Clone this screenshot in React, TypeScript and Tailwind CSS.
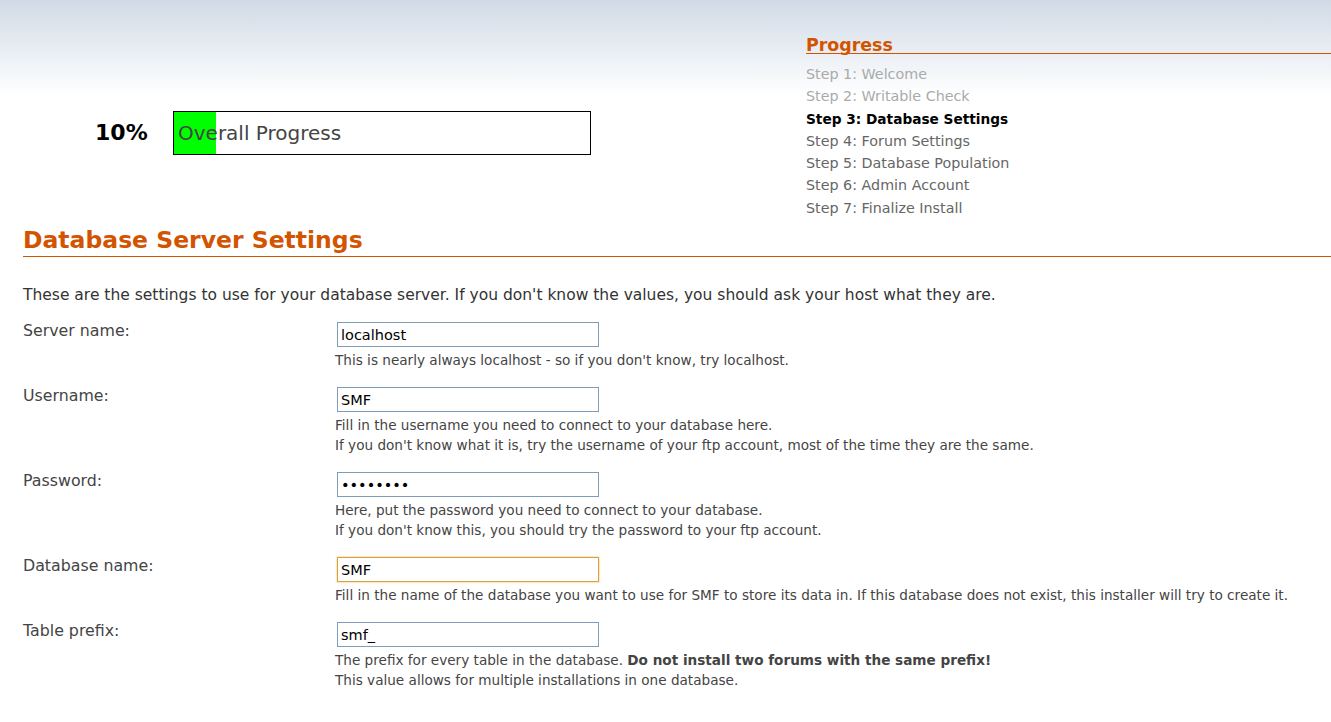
import { useState } from 'react'

type Field = {
  key: string
  label: string
  type: 'text' | 'password'
  initial: string
  help: React.ReactNode[]
  focused?: boolean
}

const steps = [
  { label: 'Step 1: Welcome', state: 'done' },
  { label: 'Step 2: Writable Check', state: 'done' },
  { label: 'Step 3: Database Settings', state: 'current' },
  { label: 'Step 4: Forum Settings', state: 'todo' },
  { label: 'Step 5: Database Population', state: 'todo' },
  { label: 'Step 6: Admin Account', state: 'todo' },
  { label: 'Step 7: Finalize Install', state: 'todo' },
]

const fields: Field[] = [
  {
    key: 'server',
    label: 'Server name:',
    type: 'text',
    initial: 'localhost',
    help: ["This is nearly always localhost - so if you don't know, try localhost."],
  },
  {
    key: 'user',
    label: 'Username:',
    type: 'text',
    initial: 'SMF',
    help: [
      'Fill in the username you need to connect to your database here.',
      "If you don't know what it is, try the username of your ftp account, most of the time they are the same.",
    ],
  },
  {
    key: 'password',
    label: 'Password:',
    type: 'password',
    initial: 'password',
    help: [
      'Here, put the password you need to connect to your database.',
      "If you don't know this, you should try the password to your ftp account.",
    ],
  },
  {
    key: 'dbname',
    label: 'Database name:',
    type: 'text',
    initial: 'SMF',
    focused: true,
    help: [
      'Fill in the name of the database you want to use for SMF to store its data in. If this database does not exist, this installer will try to create it.',
    ],
  },
  {
    key: 'prefix',
    label: 'Table prefix:',
    type: 'text',
    initial: 'smf_',
    help: [
      <>
        The prefix for every table in the database.{' '}
        <b className="font-bold">Do not install two forums with the same prefix!</b>
      </>,
      'This value allows for multiple installations in one database.',
    ],
  },
]

function App() {
  const [values, setValues] = useState<Record<string, string>>(() =>
    Object.fromEntries(fields.map((f) => [f.key, f.initial])),
  )
  const percent = 10

  return (
    <div className="min-h-[722px] bg-[linear-gradient(to_bottom,#d0dae6_0px,#ffffff_95px)] font-['DejaVu_Sans',Verdana,sans-serif] text-[#333]">
      <div className="flex h-[222px]">
        <div className="flex flex-1 items-start pt-[111px] pl-[95px]">
          <div className="w-[78px] pt-[10px] text-[22px] leading-[24px] font-bold text-black">
            {percent}%
          </div>
          <div className="relative h-[44px] w-[418px] border border-black bg-white">
            <div
              className="absolute inset-y-0 left-0 bg-[#00ff00]"
              style={{ width: `${percent}%` }}
            />
            <span className="relative block pl-[4px] pt-[9px] text-[20px] leading-[24px] text-[#444]">
              Overall Progress
            </span>
          </div>
        </div>
        <div className="w-[525px] pt-[36px]">
          <h2 className="border-b border-b-[#d35400] pt-[2px] text-[17.4px] leading-[15px] font-bold text-[#d35400]">
            Progress
          </h2>
          <ul className="mt-[9px] text-[14.3px] leading-[22.3px]">
            {steps.map((step) => (
              <li
                key={step.label}
                className={
                  step.state === 'done'
                    ? 'text-[#aaa]'
                    : step.state === 'current'
                      ? 'text-[13.7px] font-bold text-black'
                      : 'text-[#666]'
                }
              >
                {step.label}
              </li>
            ))}
          </ul>
        </div>
      </div>

      <div className="pl-[23px]">
        <h1 className="border-b border-b-[#d35400] pt-[4px] pb-[2px] text-[23.5px] leading-[28px] font-bold text-[#d35400]">
          Database Server Settings
        </h1>
        <p className="mt-[28px] text-[15.5px] leading-[20px] text-[#333]">
          These are the settings to use for your database server. If you don't know the values, you
          should ask your host what they are.
        </p>

        <form className="mt-[17px]" onSubmit={(event) => event.preventDefault()}>
          {fields.map((field) => (
            <div key={field.key} className="mb-[17px] flex">
              <label
                htmlFor={field.key}
                className="w-[312px] shrink-0 text-[15.8px] leading-[17px] text-[#444]"
              >
                {field.label}
              </label>
              <div>
                <input
                  id={field.key}
                  type={field.type}
                  value={values[field.key]}
                  autoFocus={field.focused}
                  onChange={(event) =>
                    setValues((current) => ({ ...current, [field.key]: event.target.value }))
                  }
                  className={`ml-[2px] block h-[25px] w-[262px] border bg-white px-[3px] text-[14.5px] text-black outline-none ${
                    field.focused
                      ? 'border-[#dba13c] shadow-[0_0_2px_#e8b860]'
                      : 'border-[#7f9db9]'
                  }`}
                />
                <div className="mt-[3px] text-[13.6px] leading-[20px] text-[#444]">
                  {field.help.map((line, index) => (
                    <div key={index}>{line}</div>
                  ))}
                </div>
              </div>
            </div>
          ))}
        </form>
      </div>
    </div>
  )
}

export default App
